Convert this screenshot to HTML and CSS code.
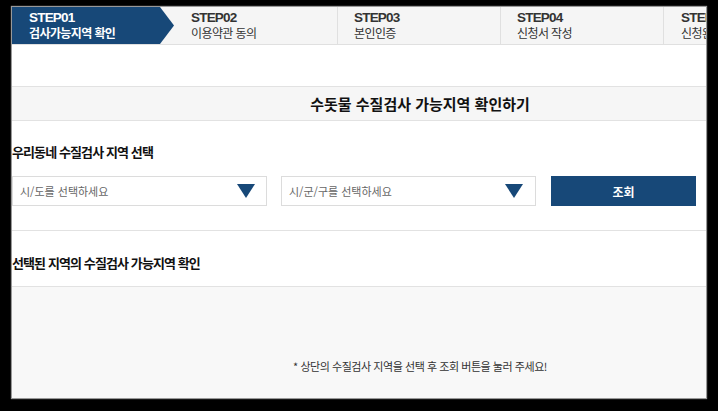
FILE: index.html
```html
<!DOCTYPE html>
<html lang="ko">
<head>
<meta charset="utf-8">
<title>수돗물 수질검사 가능지역 확인하기</title>
<link rel="stylesheet" href="styles.css">
</head>
<body>
<div class="page">
  <ol class="steps">
    <li class="step step-active">
      <span class="step-num">STEP01</span>
      <span class="step-label">검사가능지역 확인</span>
    </li>
    <li class="step">
      <span class="step-num">STEP02</span>
      <span class="step-label">이용약관 동의</span>
    </li>
    <li class="step">
      <span class="step-num">STEP03</span>
      <span class="step-label">본인인증</span>
    </li>
    <li class="step">
      <span class="step-num">STEP04</span>
      <span class="step-label">신청서 작성</span>
    </li>
    <li class="step">
      <span class="step-num">STEP05</span>
      <span class="step-label">신청완료</span>
    </li>
  </ol>

  <div class="spacer"></div>

  <h1 class="page-title">수돗물 수질검사 가능지역 확인하기</h1>

  <section class="search">
    <h2 class="section-title">우리동네 수질검사 지역 선택</h2>
    <div class="search-row">
      <div class="select">
        <span class="select-text">시/도를 선택하세요</span>
        <svg class="select-arrow" width="18" height="14" viewBox="0 0 18 14"><polygon points="0,0 18,0 9,14" fill="#174878"/></svg>
      </div>
      <div class="select">
        <span class="select-text">시/군/구를 선택하세요</span>
        <svg class="select-arrow" width="18" height="14" viewBox="0 0 18 14"><polygon points="0,0 18,0 9,14" fill="#174878"/></svg>
      </div>
      <button class="btn-search" type="button">조회</button>
    </div>
  </section>

  <section class="result-head">
    <h2 class="section-title">선택된 지역의 수질검사 가능지역 확인</h2>
  </section>

  <div class="result-body">
    <p class="note">* 상단의 수질검사 지역을 선택 후 조회 버튼을 눌러 주세요!</p>
  </div>
</div>
</body>
</html>
```

FILE: styles.css
```css
html, body {
  margin: 0;
  padding: 0;
  background: #000;
  height: 411px;
  overflow: hidden;
}

body {
  font-family: "Noto Sans CJK KR", "Noto Sans", sans-serif;
  color: #222;
}

.page {
  margin: 7px 0 0 12px;
  width: 694px;
  height: 391px;
  background: #fff;
  overflow: hidden;
  display: flex;
  flex-direction: column;
  box-shadow: 0 0 1px 1px rgba(170, 170, 170, 0.9);
}

/* step bar */
.steps {
  list-style: none;
  margin: 0;
  padding: 0;
  display: flex;
  height: 37px;
  background: #f5f5f5;
  border-bottom: 1px solid #e0e0e0;
  flex-shrink: 0;
}

.step {
  width: 163px;
  flex-shrink: 0;
  box-sizing: border-box;
  padding: 1px 0 0 16px;
  display: flex;
  flex-direction: column;
  justify-content: center;
  color: #333;
}

.step:nth-child(2),
.step:nth-child(3),
.step:nth-child(4) {
  border-right: 1px solid #e0e0e0;
}

.step:nth-child(5) {
  padding-left: 17px;
}

.step-active {
  padding-left: 17px;
  background: #174878;
  color: #fff;
  clip-path: polygon(0 0, 148px 0, 162px 50%, 148px 100%, 0 100%);
}

.step-num {
  font-family: "Liberation Sans", Arial, sans-serif;
  font-weight: bold;
  font-size: 13.5px;
  line-height: 14px;
  letter-spacing: -0.8px;
}

.step-label {
  font-size: 12px;
  line-height: 16px;
  letter-spacing: -0.6px;
}

.step-active .step-label {
  font-weight: bold;
}

.spacer {
  height: 41px;
  flex-shrink: 0;
}

.page-title {
  margin: 0;
  height: 33px;
  flex-shrink: 0;
  box-sizing: content-box;
  border-top: 1px solid #e2e2e2;
  border-bottom: 1px solid #e2e2e2;
  background: #f6f6f6;
  font-size: 15px;
  line-height: 33px;
  font-weight: bold;
  color: #111;
  text-align: center;
  padding-left: 122px;
}

.section-title {
  margin: 0;
  font-size: 13px;
  line-height: 18px;
  font-weight: bold;
  letter-spacing: -0.9px;
  color: #111;
}

.search {
  padding: 22px 0 24px;
  border-bottom: 1px solid #e2e2e2;
  flex-shrink: 0;
}

.search-row {
  margin-top: 15px;
  display: flex;
  height: 30px;
}

.select {
  width: 255px;
  box-sizing: border-box;
  border: 1px solid #dcdcdc;
  background: #fff;
  display: flex;
  align-items: center;
  justify-content: space-between;
  padding: 0 11px 0 7px;
  margin-right: 14px;
}

.select + .select {
  margin-right: 15px;
  padding-right: 12px;
}

.select-text {
  font-size: 11px;
  color: #666;
}

.btn-search {
  width: 145px;
  border: 0;
  background: #174878;
  color: #fff;
  font-family: "Noto Sans CJK KR", "Noto Sans", sans-serif;
  font-size: 12px;
  font-weight: bold;
  padding: 0;
}

.result-head {
  padding: 23px 0 14px;
  border-bottom: 1px solid #e2e2e2;
  flex-shrink: 0;
}

.result-body {
  flex: 1;
  background: #f8f8f8;
  padding-top: 71px;
}

.note {
  margin: 0;
  padding-left: 122px;
  text-align: center;
  font-size: 11px;
  line-height: 16px;
  letter-spacing: -0.45px;
  color: #333;
}
```
